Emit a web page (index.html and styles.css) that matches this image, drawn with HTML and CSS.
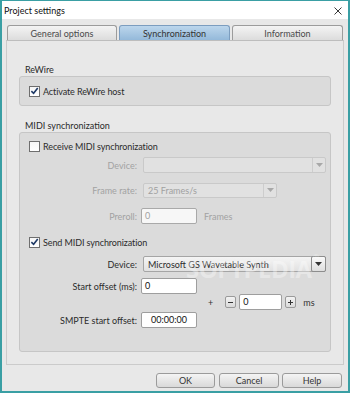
FILE: index.html
```html
<!DOCTYPE html>
<html>
<head>
<meta charset="utf-8">
<link rel="stylesheet" href="styles.css">
</head>
<body>
<div class="window">
  <div class="titlebar">
    <span class="title">Project settings</span>
    <svg class="close" width="8" height="8" viewBox="0 0 8 8"><path d="M0.5 0.5L7.5 7.5M7.5 0.5L0.5 7.5" stroke="#222" stroke-width="0.9" fill="none"/></svg>
  </div>
  <div class="tabs">
    <div class="tab t1">General options</div>
    <div class="tab t2 active">Synchronization</div>
    <div class="tab t3">Information</div>
  </div>
  <div class="pane">
    <div class="glabel gl1">ReWire</div>
    <div class="group g1">
      <div class="crow">
        <span class="box"><svg width="10" height="10" viewBox="0 0 10 10"><path d="M1.5 5.2L4 7.6L8.6 1.8" stroke="#1f3a66" stroke-width="1.8" fill="none"/></svg></span>
        <span class="ctext">Activate ReWire host</span>
      </div>
    </div>
    <div class="glabel gl2">MIDI synchronization</div>
    <div class="group g2">
      <div class="crow c1">
        <span class="box"></span>
        <span class="ctext">Receive MIDI synchronization</span>
      </div>
      <div class="row r2 dis">
        <span class="lbl">Device:</span>
        <div class="select sdis wdev"><span class="val"></span><span class="arrow"><svg width="7" height="4" viewBox="0 0 7 4"><path d="M0 0H7L3.5 4Z" fill="#a8a8a8"/></svg></span></div>
      </div>
      <div class="row r3 dis">
        <span class="lbl">Frame rate:</span>
        <div class="select sdis wfr"><span class="val">25 Frames/s</span><span class="arrow"><svg width="7" height="4" viewBox="0 0 7 4"><path d="M0 0H7L3.5 4Z" fill="#a8a8a8"/></svg></span></div>
      </div>
      <div class="row r4 dis">
        <span class="lbl">Preroll:</span>
        <div class="input idis">0</div>
        <span class="unit">Frames</span>
      </div>
      <div class="crow c5">
        <span class="box"><svg width="10" height="10" viewBox="0 0 10 10"><path d="M1.5 5.2L4 7.6L8.6 1.8" stroke="#1f3a66" stroke-width="1.8" fill="none"/></svg></span>
        <span class="ctext">Send MIDI synchronization</span>
      </div>
      <div class="row r6">
        <span class="lbl">Device:</span>
        <div class="select wdev"><span class="val">Microsoft GS Wavetable Synth</span><span class="arrow aen"><svg width="7" height="4" viewBox="0 0 7 4"><path d="M0 0H7L3.5 4Z" fill="#333"/></svg></span></div>
      </div>
      <div class="row r7">
        <span class="lbl">Start offset (ms):</span>
        <div class="input">0</div>
      </div>
      <div class="row r8">
        <span class="plus">+</span>
        <span class="sbtn sminus"><svg width="7" height="7" viewBox="0 0 7 7"><path d="M1 3.5H6" stroke="#333" stroke-width="1"/></svg></span>
        <div class="input ispin">0</div>
        <span class="sbtn splus"><svg width="7" height="7" viewBox="0 0 7 7"><path d="M1 3.5H6M3.5 1V6" stroke="#333" stroke-width="1"/></svg></span>
        <span class="ms">ms</span>
      </div>
      <div class="row r9">
        <span class="lbl">SMPTE start offset:</span>
        <div class="input icenter">00:00:00</div>
      </div>
    </div>
  </div>
  <div class="buttons">
    <div class="btn bok">OK</div>
    <div class="btn bcancel">Cancel</div>
    <div class="btn bhelp">Help</div>
  </div>
  <div class="watermark">SOFTPEDIA<sup>®</sup></div>
</div>
</body>
</html>
```
FILE: styles.css
```css
html, body {
  margin: 0;
  padding: 0;
  background: #e9e9e9;
}
body {
  font-family: Lato, "Open Sans", sans-serif;
  font-size: 9px;
  color: #2b2b2b;
}
.window {
  position: relative;
  width: 350px;
  height: 393px;
  box-sizing: border-box;
  border: 1px solid #3a9fa4;
  border-width: 1px 2px 2px 2px;
  background: #e8e8e8;
  overflow: hidden;
}
.titlebar {
  height: 18px;
  background: #ffffff;
  display: flex;
  align-items: center;
  justify-content: space-between;
  padding: 0 6px 0 2px;
}
.title {
  font-size: 9px;
  color: #111;
}
.close {
  margin-top: 1px;
}
.tabs {
  display: flex;
  gap: 2px;
  margin-top: 6px;
  padding-left: 5px;
  height: 15px;
}
.tab {
  box-sizing: border-box;
  height: 15px;
  border: 1px solid #9c9c9c;
  border-bottom: none;
  border-radius: 3px 3px 0 0;
  background: linear-gradient(#f4f4f4, #dcdcdc);
  color: #4a4a4a;
  display: flex;
  align-items: center;
  justify-content: center;
  font-size: 9px;
}
.t1 { width: 110px; }
.t2 { width: 111px; }
.t3 { width: 111px; }
.tab.active {
  background: linear-gradient(#bcd6ec, #94b9da);
  border-color: #7c9dbf;
  color: #333;
}
.pane {
  box-sizing: border-box;
  margin-left: 4px;
  width: 338px;
  height: 325px;
  border: 1px solid #cbcbcb;
  border-top-color: #bdbdbd;
  background: #e8e8e8;
  padding: 0 11px 0 12px;
  display: flex;
  flex-direction: column;
}
.glabel {
  height: 11px;
  line-height: 11px;
  padding-left: 6px;
  color: #2a2a2a;
}
.gl1 { margin-top: 23px; }
.gl2 { margin-top: 14px; }
.group {
  box-sizing: border-box;
  width: 312px;
  margin-top: 1px;
  border: 1px solid #c6c6c6;
  border-radius: 3px;
  background: #dbdbdb;
  display: flex;
  flex-direction: column;
}
.g1 {
  height: 30px;
  justify-content: center;
}
.g2 {
  height: 220px;
}
.crow {
  display: flex;
  align-items: center;
  height: 12px;
  padding-left: 9px;
}
.box {
  box-sizing: border-box;
  width: 11px;
  height: 11px;
  border: 1px solid #6e6e6e;
  background: linear-gradient(#f6f6f6, #ffffff);
  display: flex;
  align-items: center;
  justify-content: center;
}
.box svg { display: block; }
.ctext {
  margin-left: 3px;
  color: #2b2b2b;
  letter-spacing: -0.1px;
}
.c1 { margin-top: 7px; }
.c5 { margin-top: 12px; }
.row {
  display: flex;
  align-items: center;
  height: 16px;
}
.r2 { margin-top: 5px; }
.r3 { margin-top: 9px; }
.r4 { margin-top: 10px; }
.r6 { margin-top: 8px; }
.r7 { margin-top: 6px; }
.r8 { margin-top: 0; }
.r9 { margin-top: 2px; }
.lbl {
  width: 117px;
  text-align: right;
  color: #2b2b2b;
  flex: none;
}
.dis .lbl, .dis .unit { color: #a2a2a2; }
.select {
  box-sizing: border-box;
  height: 16px;
  margin-left: 6px;
  border: 1px solid #a5a5a5;
  border-radius: 2px;
  background: linear-gradient(#f5f5f5, #e1e1e1);
  display: flex;
  align-items: center;
}
.wdev { width: 183px; }
.wfr { width: 134px; height: 15px; }
.select .val {
  flex: 1;
  padding-left: 4px;
  color: #2b2b2b;
  white-space: nowrap;
  overflow: hidden;
}
.select .arrow {
  box-sizing: border-box;
  width: 13px;
  height: 100%;
  border-left: 1px solid #c8c8c8;
  display: flex;
  align-items: center;
  justify-content: center;
}
.select .aen {
  width: 15px;
  border: 1px solid #8d8d8d;
  border-radius: 2px;
  margin-right: -1px;
  height: 16px;
  background: linear-gradient(#fafafa, #dedede);
}
.select.sdis {
  border-color: #c9c9c9;
  background: #e1e1e1;
}
.sdis .val { color: #a0a0a0; }
.sdis .arrow { border-left-color: #cdcdcd; }
.input {
  box-sizing: border-box;
  width: 56px;
  height: 16px;
  margin-left: 4px;
  border: 1px solid #9e9e9e;
  border-radius: 2px;
  background: #ffffff;
  padding-left: 3px;
  line-height: 14px;
  color: #111;
}
.input.idis {
  background: #f7f7f7;
  border-color: #a9a9a9;
  color: #a2a2a2;
}
.unit { margin-left: 7px; }
.icenter {
  text-align: center;
  padding-left: 0;
}
.plus {
  margin-left: 188px;
  color: #333;
}
.sbtn {
  box-sizing: border-box;
  width: 11px;
  height: 12px;
  border: 1px solid #9a9a9a;
  border-radius: 2px;
  background: linear-gradient(#f3f3f3, #d9d9d9);
  display: flex;
  align-items: center;
  justify-content: center;
}
.sminus { margin-left: 12px; }
.ispin {
  width: 43px;
  margin-left: 3px;
}
.splus { margin-left: 3px; }
.ms {
  margin-left: 7px;
  color: #333;
}
.buttons {
  display: flex;
  justify-content: flex-end;
  padding-right: 6px;
  margin-top: 8px;
}
.btn {
  box-sizing: border-box;
  height: 15px;
  border: 1px solid #9b9b9b;
  border-radius: 3px;
  background: linear-gradient(#f4f4f4, #d9d9d9);
  display: flex;
  align-items: center;
  justify-content: center;
  color: #333;
}
.bok { width: 59px; }
.bcancel { width: 60px; margin-left: 4px; }
.bhelp { width: 60px; margin-left: 3px; }
.watermark {
  position: absolute;
  left: 184px;
  top: 251px;
  font-family: "Open Sans", sans-serif;
  font-weight: 700;
  font-size: 24px;
  letter-spacing: -0.5px;
  color: rgba(255, 255, 255, 0.35);
  pointer-events: none;
}
.watermark sup {
  font-size: 8px;
  vertical-align: top;
  margin-left: 1px;
}
```
